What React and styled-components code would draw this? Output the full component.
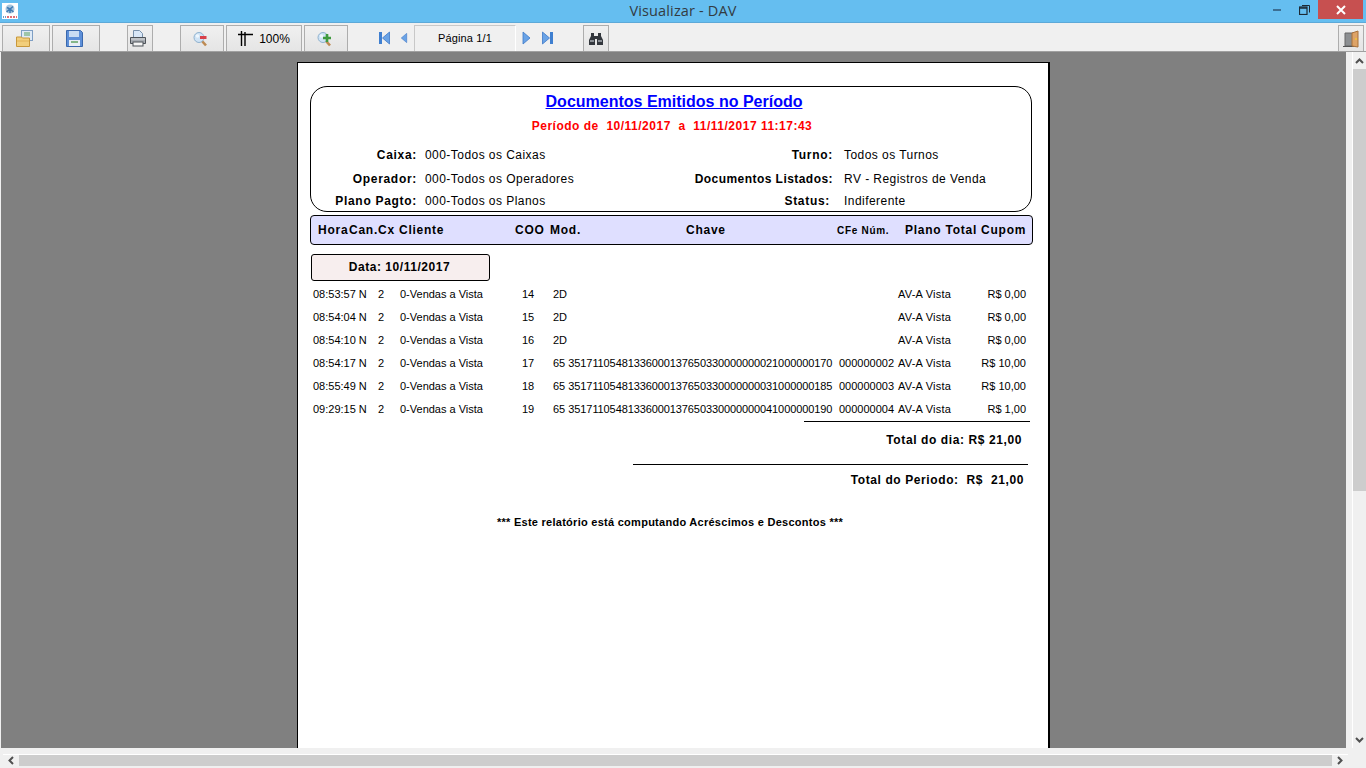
import React from "react";
import styled, { createGlobalStyle } from "styled-components";

const GlobalStyle = createGlobalStyle`
  html, body { margin: 0; padding: 0; height: 100%; overflow: hidden; background: #f0f0f0; }
  #root { height: 100%; }
  * { box-sizing: border-box; }
`;

const Win = styled.div`
  width: 1366px;
  height: 768px;
  display: flex;
  flex-direction: column;
  overflow: hidden;
  font-family: "Liberation Sans", Arial, sans-serif;
  color: #000;
`;

const TitleBar = styled.div`
  height: 23px;
  flex: none;
  display: grid;
  grid-template-columns: 1fr auto 1fr;
  align-items: start;
  background: #65bef0;
  border-bottom: 1px solid #5da9d8;
`;
const AppIcon = styled.div`
  width: 16px;
  height: 16px;
  margin: 3px 0 0 2px;
  background: #fff;
  display: flex;
`;
const Title = styled.div`
  font-family: "Open Sans", "Noto Sans", sans-serif;
  font-size: 14.5px;
  line-height: 22px;
  color: #333b42;
  letter-spacing: 0.15px;
`;
const WinButtons = styled.div`
  display: flex;
  justify-content: flex-end;
  margin-right: 3px;
`;
const WinBtn = styled.div`
  width: ${(p) => p.$w}px;
  height: 19px;
  display: flex;
  align-items: center;
  justify-content: center;
  background: ${(p) => (p.$close ? "#c75050" : "transparent")};
`;

const Toolbar = styled.div`
  height: 29px;
  flex: none;
  display: flex;
  align-items: flex-end;
  padding-left: 2px;
  padding-right: 2px;
  background: #f0f0f0;
  border-bottom: 1px solid #a0a0a0;
`;
const ToolBtn = styled.div`
  width: ${(p) => p.$w}px;
  height: 26px;
  margin-left: ${(p) => p.$ml || 0}px;
  padding-right: ${(p) => p.$pr || 0}px;
  flex: none;
  display: flex;
  align-items: center;
  justify-content: center;
  gap: 6px;
  border: 1px solid #adadad;
  border-bottom: 0;
  background: linear-gradient(#f0f0f0, #e5e5e5);
  font-size: 12px;
`;
const NavBtn = styled.div`
  width: ${(p) => p.$w}px;
  height: 26px;
  flex: none;
  display: flex;
  align-items: center;
  justify-content: center;
`;
const PageLabel = styled.div`
  width: 102px;
  height: 26px;
  flex: none;
  border: 1px solid #c8c8c8;
  border-bottom: 0;
  border-right: 1px solid #fff;
  text-align: center;
  line-height: 25px;
  font-size: 11px;
  letter-spacing: 0.15px;
`;
const Spacer = styled.div`
  flex: ${(p) => (p.$w ? "none" : 1)};
  width: ${(p) => p.$w || 0}px;
`;

const Middle = styled.div`
  flex: 1;
  min-height: 0;
  display: flex;
`;
const Viewer = styled.div`
  width: 1345px;
  margin-left: 1px;
  flex: none;
  height: 100%;
  background: #808080;
  padding-top: 10px;
  overflow: hidden;
  display: flex;
  justify-content: center;
`;
const VGutter = styled.div`
  width: 7px;
  flex: none;
  background: #f0f0f0;
  border-right: 1px solid #fff;
`;
const VScroll = styled.div`
  width: 13px;
  flex: none;
  display: flex;
  flex-direction: column;
  align-items: stretch;
  background: #f0f0f0;
`;
const Arrow = styled.div`
  height: ${(p) => p.$h}px;
  flex: none;
  display: flex;
  align-items: center;
  justify-content: center;
`;
const VThumb = styled.div`
  height: 422px;
  flex: none;
  background: #cdcdcd;
`;
const HBar = styled.div`
  height: 20px;
  flex: none;
  background: #f0f0f0;
  padding: 6px 18px 2px 3px;
`;
const HTrack = styled.div`
  height: 12px;
  border-top: 1px solid #fff;
  display: flex;
  align-items: stretch;
`;
const HThumb = styled.div`
  flex: 1;
  background: #cdcdcd;
`;
const HArrow = styled.div`
  width: 16px;
  flex: none;
  display: flex;
  align-items: center;
  justify-content: center;
`;

const Sheet = styled.div`
  width: 753px;
  height: 800px;
  flex: none;
  background: #fff;
  border: 1px solid #000;
  border-right-width: 2px;
  padding: 23px 0 0 12px;
`;

const HeaderBox = styled.div`
  width: 722px;
  height: 126px;
  border: 1px solid #000;
  border-radius: 17px;
`;
const ReportTitle = styled.div`
  margin-top: 5px;
  text-align: center;
  padding-left: 6px;
  font-size: 16px;
  line-height: 20px;
  font-weight: bold;
  color: #0000ff;
  text-decoration: underline;
`;
const Period = styled.div`
  margin-top: 6px;
  text-align: center;
  padding-left: 2px;
  font-size: 12px;
  line-height: 16px;
  font-weight: bold;
  color: #ff0000;
  letter-spacing: 0.5px;
  white-space: pre;
`;
const InfoGrid = styled.div`
  margin-top: 9px;
  display: grid;
  grid-template-columns: 106px 8px 270px 138px 11px 1fr;
  grid-template-rows: 24px 24px 20px;
  align-items: center;
  font-size: 12px;
`;
const InfoLabel = styled.div`
  grid-column: ${(p) => p.$col};
  text-align: right;
  font-weight: bold;
  white-space: nowrap;
  letter-spacing: ${(p) => p.$ls || 0.7}px;
  justify-self: end;
  margin-right: ${(p) => p.$mr || 0}px;
`;
const InfoValue = styled.div`
  grid-column: ${(p) => p.$col};
  white-space: nowrap;
  letter-spacing: 0.45px;
`;

const TableHead = styled.div`
  width: 723px;
  height: 30px;
  margin-top: 3px;
  padding-left: 7px;
  background: #dfdfff;
  border: 1px solid #000;
  border-radius: 4px;
  display: grid;
  grid-template-columns: 31px 50px 116px 35px 136px 151px 68px 1fr;
  align-items: center;
  font-size: 12px;
  font-weight: bold;
  letter-spacing: 0.75px;
  white-space: nowrap;
`;
const SmallHead = styled.span`
  font-size: 10px;
  letter-spacing: 0.7px;
`;
const DateBox = styled.div`
  width: 179px;
  height: 27px;
  margin: 9px 0 0 1px;
  padding-right: 2px;
  background: #f7eeee;
  border: 1px solid #000;
  border-radius: 3px;
  text-align: center;
  line-height: 25px;
  font-size: 12px;
  font-weight: bold;
  letter-spacing: 0.55px;
`;
const Rows = styled.div`
  margin-top: 1px;
`;
const Row = styled.div`
  width: 713px;
  height: 23px;
  margin-left: 3px;
  display: grid;
  grid-template-columns: 65px 22px 122px 31px 286px 59px 1fr;
  align-items: center;
  font-size: 11px;
  white-space: nowrap;
`;
const Amount = styled.div`
  display: flex;
  justify-content: space-between;
`;
const PlanName = styled.span`
  letter-spacing: 0.2px;
`;
const Key = styled.span`
  letter-spacing: -0.1px;
`;
const Rule = styled.div`
  height: 1px;
  background: #000;
  width: ${(p) => p.$w}px;
  margin: ${(p) => p.$mt}px 0 0 ${(p) => p.$ml}px;
`;
const Total = styled.div`
  width: ${(p) => p.$w}px;
  margin-top: ${(p) => p.$mt}px;
  text-align: right;
  font-size: 12px;
  line-height: 16px;
  font-weight: bold;
  letter-spacing: 0.6px;
  white-space: pre;
`;
const Note = styled.div`
  width: 720px;
  margin-top: 27px;
  text-align: center;
  font-size: 11px;
  line-height: 14px;
  font-weight: bold;
  letter-spacing: 0.27px;
`;

const Magnifier = ({ plus }) => (
  <svg width="18" height="16" viewBox="0 0 18 16">
    <path d="M9 10l4 4.500" stroke="#bd8a52" strokeWidth="2.600" />
    <circle cx="6" cy="6.500" r="5" fill="#cfe3f5" stroke="#8fb2cf" />
    <circle cx="4.500" cy="5" r="1.800" fill="#eef6fd" />
    {plus ? (
      <path d="M6 7h8M10 3v8" stroke="#3e9a3e" strokeWidth="2.600" />
    ) : (
      <path d="M7 6.500h6.500" stroke="#d8404a" strokeWidth="3" />
    )}
  </svg>
);

const NavIcon = ({ dir, end }) => (
  <svg width="13" height="14" viewBox="0 0 13 14" style={{ transform: dir === "right" ? "scaleX(-1)" : "none" }}>
    {end && <rect x="1" y="1" width="3" height="12" fill="#3f7fd0" />}
    <path d={end ? "M11.500 1v12L4.500 7z" : "M10 1v12L3 7z"} fill="#6aa3e6" stroke="#3d78c8" strokeWidth="0.800" />
  </svg>
);

const rows = [
  ["08:53:57 N", "14", "2D", "", "", "R$ 0,00"],
  ["08:54:04 N", "15", "2D", "", "", "R$ 0,00"],
  ["08:54:10 N", "16", "2D", "", "", "R$ 0,00"],
  ["08:54:17 N", "17", "65", "35171105481336000137650330000000021000000170", "000000002", "R$ 10,00"],
  ["08:55:49 N", "18", "65", "35171105481336000137650330000000031000000185", "000000003", "R$ 10,00"],
  ["09:29:15 N", "19", "65", "35171105481336000137650330000000041000000190", "000000004", "R$ 1,00"],
];

export default function App() {
  return (
    <Win>
      <GlobalStyle />
      <TitleBar>
        <AppIcon>
          <svg width="16" height="16" viewBox="0 0 16 16">
            <circle cx="8" cy="6" r="4.500" fill="#a9c6de" />
            <path d="M5 4.500l3 1.500 3-2.500M8 6v4M4.500 9L8 6l3.500 3" stroke="#3f7cb4" strokeWidth="1.500" fill="none" />
            <path d="M1 14h3" stroke="#3f7cb4" strokeWidth="1.600" strokeDasharray="1 1" />
            <path d="M5 14h10" stroke="#d8404a" strokeWidth="1.600" strokeDasharray="2 1" />
          </svg>
        </AppIcon>
        <Title>Visualizar - DAV</Title>
        <WinButtons>
          <WinBtn $w={26}>
            <svg width="10" height="4" viewBox="0 0 10 4"><rect y="1" width="8" height="2" fill="#3c6f94" /></svg>
          </WinBtn>
          <WinBtn $w={27}>
            <svg width="11" height="11" viewBox="0 0 11 11" fill="none" stroke="#1d2a35">
              <path d="M3 1.500h7.500v7" />
              <rect x="0.500" y="3" width="7.500" height="7.500" strokeWidth="1.200" />
              <path d="M0.500 4h7.500" strokeWidth="1.500" />
            </svg>
          </WinBtn>
          <WinBtn $w={45} $close>
            <svg width="10" height="10" viewBox="0 0 10 10"><path d="M1 1l8 8M9 1L1 9" stroke="#fff" strokeWidth="2" /></svg>
          </WinBtn>
        </WinButtons>
      </TitleBar>

      <Toolbar>
        <ToolBtn $w={48} $pr={4}>
          <svg width="17" height="17" viewBox="0 0 17 17">
            <rect x="5.500" y="0.500" width="11" height="10" fill="#dfeaf6" stroke="#7f9fc4" />
            <path d="M8 3h6M8 5h6" stroke="#5da05d" />
            <path d="M0.500 7h5l1 1h7v8.500h-13z" fill="#f2cf7c" stroke="#c8983c" />
            <path d="M1 11h12" stroke="#e3b458" />
          </svg>
        </ToolBtn>
        <ToolBtn $w={48} $ml={2} $pr={4}>
          <svg width="17" height="17" viewBox="0 0 17 17">
            <path d="M0.500 0.500h14l2 2v14H.5z" fill="#5d8fd8" stroke="#3a68ad" />
            <rect x="3" y="1" width="10" height="6" fill="#c9dcf3" />
            <rect x="3" y="10" width="11" height="6" fill="#e8eef5" />
            <path d="M5 12h7" stroke="#63a363" strokeWidth="1.500" />
          </svg>
        </ToolBtn>
        <ToolBtn $w={26} $ml={27} $pr={4}>
          <svg width="16" height="17" viewBox="0 0 16 17">
            <path d="M3.500 0.500h6l3 3v5h-9z" fill="#d8e6f6" stroke="#7890aa" />
            <path d="M0.500 7.500h15v6h-15z" fill="#a8adb3" stroke="#4d5258" />
            <path d="M1 9h14" stroke="#d5d8db" />
            <rect x="3" y="12" width="10" height="4" fill="#f5f5f5" stroke="#4d5258" />
          </svg>
        </ToolBtn>
        <ToolBtn $w={44} $ml={27}>
          <Magnifier />
        </ToolBtn>
        <ToolBtn $w={76} $ml={2}>
          <svg width="15" height="15" viewBox="0 0 15 15">
            <path d="M0 3.500h15M3.500 0v15M7 1v14" stroke="#000" strokeWidth="1.400" />
          </svg>
          <span>100%</span>
        </ToolBtn>
        <ToolBtn $w={44} $ml={2}>
          <Magnifier plus />
        </ToolBtn>
        <Spacer $w={29} />
        <NavBtn $w={14}><NavIcon dir="left" end /></NavBtn>
        <Spacer $w={8} />
        <NavBtn $w={10}><NavIcon dir="left" /></NavBtn>
        <Spacer $w={5} />
        <PageLabel>Página 1/1</PageLabel>
        <Spacer $w={3} />
        <NavBtn $w={15}><NavIcon dir="right" /></NavBtn>
        <Spacer $w={6} />
        <NavBtn $w={14}><NavIcon dir="right" end /></NavBtn>
        <Spacer $w={29} />
        <ToolBtn $w={26}>
          <svg width="14" height="13" viewBox="0 0 14 13">
            <path d="M2 1h3v3h4V1h3v3l2 4v5H8V7H6v6H0V8l2-4z" fill="#33373d" />
            <path d="M1 9h4M9 9h4" stroke="#a8adb3" strokeWidth="1.600" />
          </svg>
        </ToolBtn>
        <Spacer />
        <ToolBtn $w={26}>
          <svg width="17" height="18" viewBox="0 0 17 18">
            <path d="M2 3h9v13H2z" fill="#8c8f92" stroke="#666" />
            <path d="M0 16.500h11" stroke="#555" />
            <path d="M9 3l6-2v16l-6-1z" fill="#dda367" stroke="#a8703a" />
            <circle cx="13" cy="9" r="1" fill="#f4c430" />
          </svg>
        </ToolBtn>
      </Toolbar>

      <Middle>
        <Viewer>
          <Sheet>
            <HeaderBox>
              <ReportTitle>Documentos Emitidos no Período</ReportTitle>
              <Period>{"Período de  10/11/2017  a  11/11/2017 11:17:43"}</Period>
              <InfoGrid>
                <InfoLabel $col={1}>Caixa:</InfoLabel>
                <InfoValue $col={3}>000-Todos os Caixas</InfoValue>
                <InfoLabel $col={4}>Turno:</InfoLabel>
                <InfoValue $col={6}>Todos os Turnos</InfoValue>
                <InfoLabel $col={1}>Operador:</InfoLabel>
                <InfoValue $col={3}>000-Todos os Operadores</InfoValue>
                <InfoLabel $col={4} $ls={0.45}>Documentos Listados:</InfoLabel>
                <InfoValue $col={6}>RV - Registros de Venda</InfoValue>
                <InfoLabel $col={1}>Plano Pagto:</InfoLabel>
                <InfoValue $col={3}>000-Todos os Planos</InfoValue>
                <InfoLabel $col={4} $mr={3}>Status:</InfoLabel>
                <InfoValue $col={6}>Indiferente</InfoValue>
              </InfoGrid>
            </HeaderBox>

            <TableHead>
              <span>Hora</span>
              <span>Can.Cx</span>
              <span>Cliente</span>
              <span>COO</span>
              <span>Mod.</span>
              <span>Chave</span>
              <SmallHead>CFe Núm.</SmallHead>
              <span>Plano Total Cupom</span>
            </TableHead>

            <DateBox>Data: 10/11/2017</DateBox>

            <Rows>
              {rows.map((r) => (
                <Row key={r[1]}>
                  <span>{r[0]}</span>
                  <span>2</span>
                  <span>0-Vendas a Vista</span>
                  <span>{r[1]}</span>
                  <span>
                    {r[2]} <Key>{r[3]}</Key>
                  </span>
                  <span>{r[4]}</span>
                  <Amount>
                    <PlanName>AV-A Vista</PlanName>
                    <span>{r[5]}</span>
                  </Amount>
                </Row>
              ))}
            </Rows>
            <Rule $w={226} $mt={1} $ml={494} />
            <Total $w={712} $mt={10}>Total do dia: R$ 21,00</Total>
            <Rule $w={395} $mt={16} $ml={323} />
            <Total $w={714} $mt={7}>{"Total do Periodo:  R$  21,00"}</Total>
            <Note>*** Este relatório está computando Acréscimos e Descontos ***</Note>
          </Sheet>
        </Viewer>
        <VGutter />
        <VScroll>
          <Arrow $h={17}>
            <svg width="9" height="6" viewBox="0 0 9 6"><path d="M1 5l3.500-3.500L8 5" fill="none" stroke="#505050" strokeWidth="2" /></svg>
          </Arrow>
          <VThumb />
          <Spacer />
          <Arrow $h={17}>
            <svg width="9" height="6" viewBox="0 0 9 6"><path d="M1 1l3.500 3.500L8 1" fill="none" stroke="#505050" strokeWidth="2" /></svg>
          </Arrow>
        </VScroll>
      </Middle>

      <HBar>
        <HTrack>
          <HArrow>
            <svg width="6" height="9" viewBox="0 0 6 9"><path d="M5 1L1.500 4.500 5 8" fill="none" stroke="#505050" strokeWidth="2" /></svg>
          </HArrow>
          <HThumb />
          <HArrow>
            <svg width="6" height="9" viewBox="0 0 6 9"><path d="M1 1l3.500 3.500L1 8" fill="none" stroke="#505050" strokeWidth="2" /></svg>
          </HArrow>
        </HTrack>
      </HBar>
    </Win>
  );
}
